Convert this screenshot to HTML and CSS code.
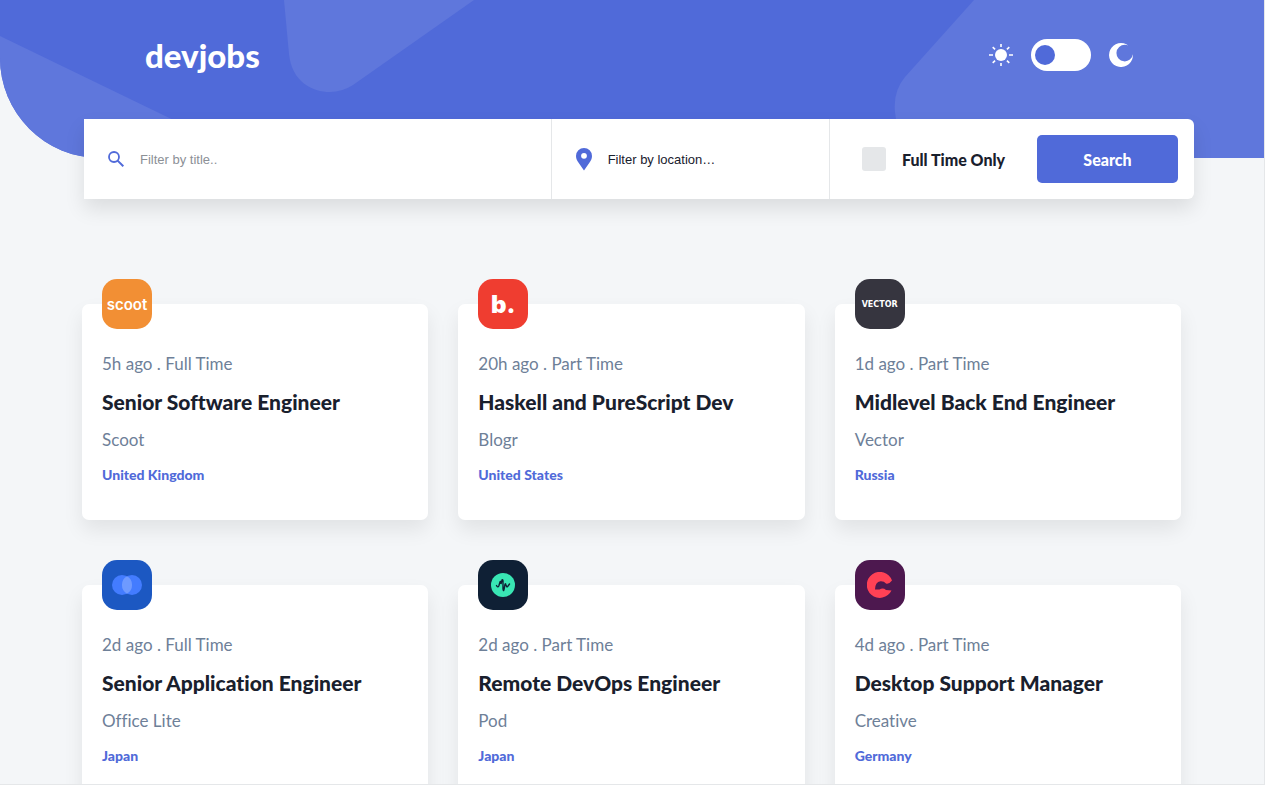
FILE: index.html
```html
<!DOCTYPE html>
<html lang="en">
<head>
    <meta charset="UTF-8">
    <meta name="viewport" content="width=device-width, initial-scale=1.0">
    <title>devjobs</title>
    <link rel="stylesheet" href="styles.css">
</head>
<body>
    <div class="page">
        <header class="header">
            <svg class="header-bg" viewBox="0 0 1264 158" preserveAspectRatio="none" aria-hidden="true">
                <path d="M0 36 252 158H0z"/>
                <path d="M284 0 289 54C292 82 312 92 330 92Q342 92 353 85L474 0z"/>
                <path d="M974 0 905 77Q893 91 895 112Q898 140 914 158H1264V0z"/>
            </svg>
            <div class="header-inner">
                <nav class="nav">
                    <a href="#" class="logo">devjobs</a>
                    <div class="theme">
                        <svg width="24" height="24" viewBox="0 0 24 24" aria-hidden="true">
                            <circle cx="12" cy="12" r="6" fill="#fff"/>
                            <path d="M12 1v3M12 20v3M0 12h4M20 12h4M3.700 4.200l2.400 2.200M17.900 17.600l2.400 2.200M20.300 4.200l-2.400 2.200M6.100 17.600l-2.400 2.200" stroke="#fff" stroke-width="1.600"/>
                        </svg>
                        <input type="checkbox" class="toggle" aria-label="Dark mode">
                        <svg width="24" height="24" viewBox="0 0 24 24" aria-hidden="true">
                            <path d="M19.6 2.7A12 12 0 1 0 24 11.2A8.3 8.3 0 1 1 16 1.8Q18 1.8 19.6 2.7z" fill="#fff"/>
                        </svg>
                    </div>
                </nav>

                <form class="search">
                    <div class="field">
                        <svg width="16" height="16" viewBox="0 0 16 16" aria-hidden="true">
                            <circle cx="6" cy="6" r="5" fill="none" stroke="#506ad9" stroke-width="1.8"/>
                            <path d="M9.6 9.6 15.3 15.3" stroke="#506ad9" stroke-width="2"/>
                        </svg>
                        <input type="text" class="field-input" placeholder="Filter by title.." aria-label="Filter by title">
                    </div>
                    <div class="field">
                        <svg width="16" height="24" viewBox="0 0 16 24" aria-hidden="true">
                            <path d="M8 1a8 8 0 0 0-8 8c0 3 1.2 4.8 2.6 6.8L8 23.400l5.400-7.600C14.800 13.800 16 12 16 9a8 8 0 0 0-8-8zm0 4.900a2.900 2.900 0 1 1 0 5.800 2.900 2.900 0 0 1 0-5.800z" fill="#506ad9"/>
                        </svg>
                        <select class="field-select" aria-label="Filter by location">
                            <option>Filter by location…</option>
                        </select>
                    </div>
                    <div class="actions">
                        <label class="check"><input type="checkbox" class="check-box">Full Time Only</label>
                        <button type="submit" class="btn">Search</button>
                    </div>
                </form>
            </div>
        </header>

        <main class="jobs">
            <article class="card">
                <div class="card-logo scoot">scoot</div>
                <p class="meta">5h ago . Full Time</p>
                <h2 class="title">Senior Software Engineer</h2>
                <p class="company">Scoot</p>
                <p class="location">United Kingdom</p>
            </article>
            <article class="card">
                <div class="card-logo blogr">b.</div>
                <p class="meta">20h ago . Part Time</p>
                <h2 class="title">Haskell and PureScript Dev</h2>
                <p class="company">Blogr</p>
                <p class="location">United States</p>
            </article>
            <article class="card">
                <div class="card-logo vector">VECTOR</div>
                <p class="meta">1d ago . Part Time</p>
                <h2 class="title">Midlevel Back End Engineer</h2>
                <p class="company">Vector</p>
                <p class="location">Russia</p>
            </article>
            <article class="card">
                <div class="card-logo office">
                    <svg width="30" height="20" viewBox="0 0 30 20" aria-hidden="true">
                        <circle cx="10" cy="10" r="10" fill="#437cff"/>
                        <circle cx="20" cy="10" r="10" fill="#437cff"/>
                        <path d="M15 1.300a10 10 0 0 1 0 17.400a10 10 0 0 1 0-17.400z" fill="#6e9aff"/>
                    </svg>
                </div>
                <p class="meta">2d ago . Full Time</p>
                <h2 class="title">Senior Application Engineer</h2>
                <p class="company">Office Lite</p>
                <p class="location">Japan</p>
            </article>
            <article class="card">
                <div class="card-logo pod">
                    <svg width="24" height="24" viewBox="0 0 24 24" aria-hidden="true">
                        <circle cx="12" cy="12" r="12" fill="#39e6b4"/>
                        <path d="M5.500 12.500Q6.800 15 7.800 13L9 9Q9.600 7.500 10 9.500V11L11 7Q11.600 6 12 8V16Q12.400 19 13 16.500L14 11.500Q14.500 9.800 15 12L15.600 13.500Q16.300 14.500 17 13L18.500 11" fill="none" stroke="#0f2035" stroke-width="1.400" stroke-linecap="round"/>
                    </svg>
                </div>
                <p class="meta">2d ago . Part Time</p>
                <h2 class="title">Remote DevOps Engineer</h2>
                <p class="company">Pod</p>
                <p class="location">Japan</p>
            </article>
            <article class="card">
                <div class="card-logo creative">
                    <svg width="26" height="26" viewBox="0 0 26 26" aria-hidden="true">
                        <path d="M25 8.500A13 13 0 1 0 24.500 18.500L19 18Q16 15.500 12.500 17.500L8 17.500Q8 10 13.500 9.200Q17 9 19 11.500Q22 12.500 25 8.500z" fill="#ff4155"/>
                    </svg>
                </div>
                <p class="meta">4d ago . Part Time</p>
                <h2 class="title">Desktop Support Manager</h2>
                <p class="company">Creative</p>
                <p class="location">Germany</p>
            </article>
        </main>
    </div>
</body>
</html>
```

FILE: styles.css
```css
* {
    box-sizing: border-box;
}
body {
    margin: 0;
    font-family: Lato, sans-serif;
    font-variant-ligatures: none;
    background: #f4f6f8;
    color: #19202d;
}
.page {
    height: 100vh;
    overflow: hidden;
    border-right: 1px solid #e5e7e9;
    border-bottom: 1px solid #e5e7e9;
}

/* header */
.header {
    position: relative;
    height: 158px;
    background: #506ad9;
    border-bottom-left-radius: 100px;
}
.header-bg {
    position: absolute;
    inset: 0;
    width: 100%;
    height: 100%;
    fill: #5f77dc;
    border-bottom-left-radius: 100px;
}
.header-inner {
    position: relative;
    margin: 0 70px 0 84px;
}
.nav {
    display: flex;
    align-items: center;
    justify-content: space-between;
    height: 119px;
    padding: 0 61px 9px;
}
.logo {
    color: #fff;
    font-size: 33px;
    font-weight: 900;
    line-height: 40px;
    text-decoration: none;
}
.theme {
    display: flex;
    align-items: center;
    gap: 18px;
}
.toggle {
    appearance: none;
    display: flex;
    align-items: center;
    width: 60px;
    height: 32px;
    margin: 0;
    padding: 0 4px;
    border-radius: 16px;
    background: #fff;
    cursor: pointer;
}
.toggle::before {
    content: "";
    width: 20px;
    height: 20px;
    border-radius: 50%;
    background: #506ad9;
}
.toggle:checked {
    justify-content: flex-end;
}

/* search bar */
.search {
    display: grid;
    grid-template-columns: 42fr 25fr 364px;
    height: 80px;
    background: #fff;
    border-radius: 0 6px 6px 0;
    box-shadow: 0 10px 20px rgba(0, 0, 0, 0.1);
}
.field {
    display: flex;
    align-items: center;
    gap: 16px;
    padding: 0 24px;
    border-right: 1px solid #e5e7e9;
}
.field-input,
.field-select {
    appearance: none;
    flex: 1;
    min-width: 0;
    padding: 0;
    border: 0;
    outline: 0;
    background: none;
    color: #19202d;
    font-family: "Liberation Sans", Arial, sans-serif;
    font-size: 13px;
}
.field-input::placeholder {
    color: #8c9096;
}
.actions {
    display: flex;
    align-items: center;
    justify-content: space-between;
    padding: 0 16px 0 32px;
}
.check {
    display: flex;
    align-items: center;
    gap: 16px;
    font-size: 16px;
    font-weight: 900;
}
.check-box {
    appearance: none;
    width: 24px;
    height: 24px;
    margin: 0;
    border-radius: 3px;
    background: #e5e7e9;
}
.btn {
    width: 141px;
    height: 48px;
    border: 0;
    border-radius: 5px;
    background: #506ad9;
    color: #fff;
    font-family: inherit;
    font-size: 16px;
    font-weight: 900;
    cursor: pointer;
}

/* job cards */
.jobs {
    display: grid;
    grid-template-columns: repeat(3, 1fr);
    gap: 65px 30px;
    margin: 146px 83px 60px 82px;
}
.card {
    position: relative;
    padding: 50px 20px 36px;
    background: #fff;
    border-radius: 7px;
    box-shadow: 0 10px 20px rgba(0, 0, 0, 0.08);
}
.card-logo {
    position: absolute;
    top: -25px;
    left: 20px;
    display: flex;
    align-items: center;
    justify-content: center;
    width: 50px;
    height: 50px;
    border-radius: 15px;
    color: #fff;
}
.scoot {
    background: #f28f34;
    font-family: Inter, sans-serif;
    font-size: 15px;
    font-weight: 600;
}
.blogr {
    background: #ef3d30;
    font-family: Inter, sans-serif;
    font-size: 24px;
    font-weight: 900;
}
.vector {
    background: #36353f;
    font-family: "DejaVu Sans", sans-serif;
    font-size: 8px;
    font-weight: 700;
}
.office {
    background: #1c58c2;
}
.pod {
    background: #0f2035;
}
.creative {
    background: #4d184f;
}
.meta,
.company {
    margin: 0 0 16px;
    color: #6e8098;
    font-size: 17px;
    line-height: 20px;
}
.title {
    margin: 0 0 16px;
    font-size: 21px;
    font-weight: 900;
    line-height: 24px;
}
.location {
    margin: 0;
    color: #506ad9;
    font-size: 14px;
    font-weight: 900;
    line-height: 18px;
}
```
